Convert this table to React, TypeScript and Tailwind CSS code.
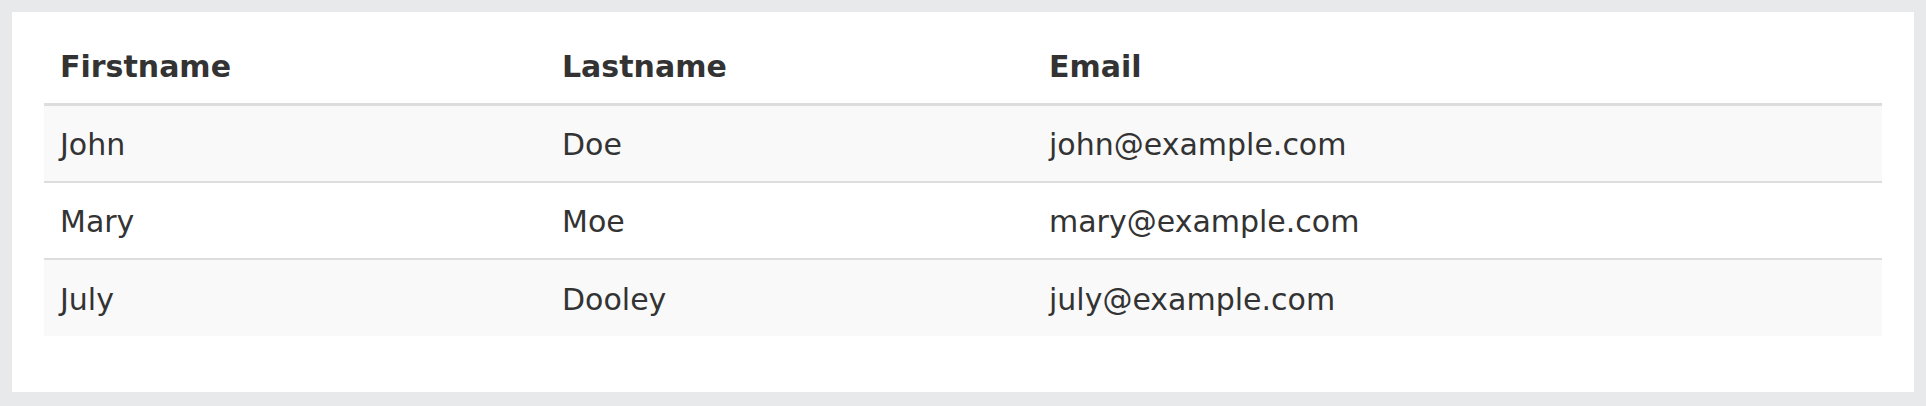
const rows = [
  { first: 'John', last: 'Doe', email: 'john@example.com' },
  { first: 'Mary', last: 'Moe', email: 'mary@example.com' },
  { first: 'July', last: 'Dooley', email: 'july@example.com' },
];

export default function App() {
  return (
    <div className="min-h-[406px] bg-[#e8e9eb] p-3 text-[#333] font-['DejaVu_Sans',Verdana,sans-serif]">
      <div className="bg-white px-8 pt-8 pb-[56px]">
        <table className="w-full table-fixed border-collapse text-[30px]">
          <colgroup>
            <col className="w-[502px]" />
            <col className="w-[487px]" />
            <col />
          </colgroup>
          <thead>
            <tr className="border-b-[3px] border-[#ddd]">
              <th className="text-left font-bold px-4 pt-[6px] pb-[19px] leading-[34px]">Firstname</th>
              <th className="text-left font-bold px-4 pt-[6px] pb-[19px] leading-[34px]">Lastname</th>
              <th className="text-left font-bold px-4 pt-[6px] pb-[19px] leading-[34px]">Email</th>
            </tr>
          </thead>
          <tbody>
            {rows.map((r, i) => (
              <tr
                key={r.email}
                className={
                  (i % 2 === 0 ? 'bg-[#f9f9f9]' : 'bg-white') +
                  (i < rows.length - 1 ? ' border-b-2 border-[#ddd]' : '')
                }
              >
                <td className="px-4 h-[77px] leading-[34px] pt-[4px]">{r.first}</td>
                <td className="px-4 h-[77px] leading-[34px] pt-[4px]">{r.last}</td>
                <td className="px-4 h-[77px] leading-[34px] pt-[4px]">{r.email}</td>
              </tr>
            ))}
          </tbody>
        </table>
      </div>
    </div>
  );
}
